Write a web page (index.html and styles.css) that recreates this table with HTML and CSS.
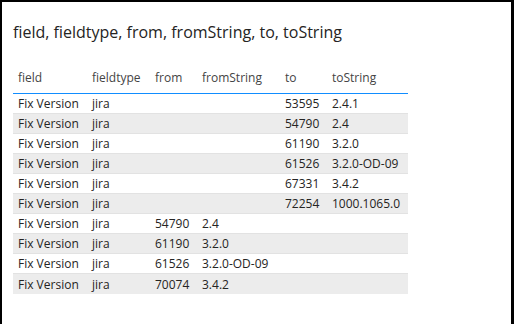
FILE: index.html
```html
<!DOCTYPE html>
<html>
<head>
<meta charset="utf-8">
<link rel="stylesheet" href="styles.css">
</head>
<body>
<div class="frame">
  <h1 class="title">field, fieldtype, from, fromString, to, toString</h1>
  <table class="grid">
    <colgroup>
      <col class="c1"><col class="c2"><col class="c3"><col class="c4"><col class="c5"><col class="c6">
    </colgroup>
    <thead>
      <tr><th>field</th><th>fieldtype</th><th>from</th><th>fromString</th><th>to</th><th>toString</th></tr>
    </thead>
    <tbody>
      <tr><td>Fix Version</td><td>jira</td><td></td><td></td><td>53595</td><td>2.4.1</td></tr>
      <tr><td>Fix Version</td><td>jira</td><td></td><td></td><td>54790</td><td>2.4</td></tr>
      <tr><td>Fix Version</td><td>jira</td><td></td><td></td><td>61190</td><td>3.2.0</td></tr>
      <tr><td>Fix Version</td><td>jira</td><td></td><td></td><td>61526</td><td>3.2.0-OD-09</td></tr>
      <tr><td>Fix Version</td><td>jira</td><td></td><td></td><td>67331</td><td>3.4.2</td></tr>
      <tr><td>Fix Version</td><td>jira</td><td></td><td></td><td>72254</td><td>1000.1065.0</td></tr>
      <tr><td>Fix Version</td><td>jira</td><td>54790</td><td>2.4</td><td></td><td></td></tr>
      <tr><td>Fix Version</td><td>jira</td><td>61190</td><td>3.2.0</td><td></td><td></td></tr>
      <tr><td>Fix Version</td><td>jira</td><td>61526</td><td>3.2.0-OD-09</td><td></td><td></td></tr>
      <tr><td>Fix Version</td><td>jira</td><td>70074</td><td>3.4.2</td><td></td><td></td></tr>
    </tbody>
  </table>
</div>
</body>
</html>
```
FILE: styles.css
```css
html, body {
  margin: 0;
  padding: 0;
  background: #000;
}
.frame {
  box-sizing: border-box;
  width: 509px;
  height: 324px;
  margin-left: 2px;
  margin-top: 2px;
  background: #fff;
  padding: 19px 0 0 11px;
  font-family: "Open Sans", "Noto Sans", sans-serif;
}
.title {
  margin: 0;
  font-size: 16px;
  font-weight: 400;
  color: #252423;
  line-height: 22px;
}
.grid {
  margin-top: 26px;
  border-collapse: separate;
  border-spacing: 0;
  table-layout: fixed;
  width: 395px;
  font-size: 12px;
  color: #252423;
}
.c1 { width: 74px; }
.c2 { width: 63px; }
.c3 { width: 47px; }
.c4 { width: 83px; }
.c5 { width: 47px; }
.c6 { width: 81px; }
.grid th {
  box-sizing: border-box;
  font-weight: 400;
  text-align: left;
  color: #444;
  padding: 0 0 0 5px;
  height: 25px;
  line-height: 18px;
  vertical-align: top;
  background: linear-gradient(#118dff, #118dff) left bottom / 100% 1px no-repeat;
  white-space: nowrap;
}
.grid td {
  box-sizing: border-box;
  padding: 1px 0 0 5px;
  height: 20px;
  line-height: 18px;
  border-bottom: 1px solid #e2e2e2;
  white-space: nowrap;
}
.grid tbody tr:nth-child(even) td {
  background: #ececec;
}
.grid tbody tr:last-child td {
  border-bottom: none;
}
```
